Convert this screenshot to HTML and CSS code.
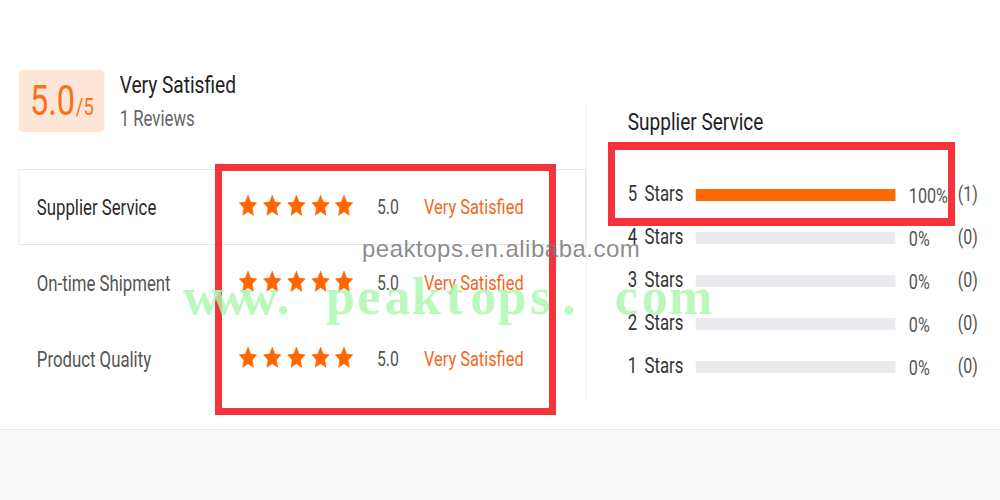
FILE: index.html
```html
<!DOCTYPE html>
<html lang="en">
<head>
<meta charset="utf-8">
<title>Supplier Reviews</title>
<link rel="stylesheet" href="styles.css">
</head>
<body>
<div class="frame">
<div class="page">
  <div class="main">
    <div class="left-col">
      <div class="summary">
        <div class="score-box"><span class="score">5.0</span><span class="score-of">/5</span></div>
        <div class="summary-text">
          <div class="summary-title">Very Satisfied</div>
          <div class="summary-count">1 Reviews</div>
        </div>
      </div>
      <div class="table">
        <div class="row active">
          <div class="row-label">Supplier Service</div>
          <div class="stars">
            <svg class="star" viewBox="0 0 24 24" preserveAspectRatio="none"><path d="M12 1.3L15.23 8.35 22.94 9.25 17.23 14.5 18.76 22.1 12 18.3 5.24 22.1 6.77 14.5 1.06 9.25 8.77 8.35Z"/></svg>
            <svg class="star" viewBox="0 0 24 24" preserveAspectRatio="none"><path d="M12 1.3L15.23 8.35 22.94 9.25 17.23 14.5 18.76 22.1 12 18.3 5.24 22.1 6.77 14.5 1.06 9.25 8.77 8.35Z"/></svg>
            <svg class="star" viewBox="0 0 24 24" preserveAspectRatio="none"><path d="M12 1.3L15.23 8.35 22.94 9.25 17.23 14.5 18.76 22.1 12 18.3 5.24 22.1 6.77 14.5 1.06 9.25 8.77 8.35Z"/></svg>
            <svg class="star" viewBox="0 0 24 24" preserveAspectRatio="none"><path d="M12 1.3L15.23 8.35 22.94 9.25 17.23 14.5 18.76 22.1 12 18.3 5.24 22.1 6.77 14.5 1.06 9.25 8.77 8.35Z"/></svg>
            <svg class="star" viewBox="0 0 24 24" preserveAspectRatio="none"><path d="M12 1.3L15.23 8.35 22.94 9.25 17.23 14.5 18.76 22.1 12 18.3 5.24 22.1 6.77 14.5 1.06 9.25 8.77 8.35Z"/></svg>
          </div>
          <div class="row-value">5.0</div>
          <div class="row-status">Very Satisfied</div>
        </div>
        <div class="row">
          <div class="row-label">On-time Shipment</div>
          <div class="stars">
            <svg class="star" viewBox="0 0 24 24" preserveAspectRatio="none"><path d="M12 1.3L15.23 8.35 22.94 9.25 17.23 14.5 18.76 22.1 12 18.3 5.24 22.1 6.77 14.5 1.06 9.25 8.77 8.35Z"/></svg>
            <svg class="star" viewBox="0 0 24 24" preserveAspectRatio="none"><path d="M12 1.3L15.23 8.35 22.94 9.25 17.23 14.5 18.76 22.1 12 18.3 5.24 22.1 6.77 14.5 1.06 9.25 8.77 8.35Z"/></svg>
            <svg class="star" viewBox="0 0 24 24" preserveAspectRatio="none"><path d="M12 1.3L15.23 8.35 22.94 9.25 17.23 14.5 18.76 22.1 12 18.3 5.24 22.1 6.77 14.5 1.06 9.25 8.77 8.35Z"/></svg>
            <svg class="star" viewBox="0 0 24 24" preserveAspectRatio="none"><path d="M12 1.3L15.23 8.35 22.94 9.25 17.23 14.5 18.76 22.1 12 18.3 5.24 22.1 6.77 14.5 1.06 9.25 8.77 8.35Z"/></svg>
            <svg class="star" viewBox="0 0 24 24" preserveAspectRatio="none"><path d="M12 1.3L15.23 8.35 22.94 9.25 17.23 14.5 18.76 22.1 12 18.3 5.24 22.1 6.77 14.5 1.06 9.25 8.77 8.35Z"/></svg>
          </div>
          <div class="row-value">5.0</div>
          <div class="row-status">Very Satisfied</div>
        </div>
        <div class="row">
          <div class="row-label">Product Quality</div>
          <div class="stars">
            <svg class="star" viewBox="0 0 24 24" preserveAspectRatio="none"><path d="M12 1.3L15.23 8.35 22.94 9.25 17.23 14.5 18.76 22.1 12 18.3 5.24 22.1 6.77 14.5 1.06 9.25 8.77 8.35Z"/></svg>
            <svg class="star" viewBox="0 0 24 24" preserveAspectRatio="none"><path d="M12 1.3L15.23 8.35 22.94 9.25 17.23 14.5 18.76 22.1 12 18.3 5.24 22.1 6.77 14.5 1.06 9.25 8.77 8.35Z"/></svg>
            <svg class="star" viewBox="0 0 24 24" preserveAspectRatio="none"><path d="M12 1.3L15.23 8.35 22.94 9.25 17.23 14.5 18.76 22.1 12 18.3 5.24 22.1 6.77 14.5 1.06 9.25 8.77 8.35Z"/></svg>
            <svg class="star" viewBox="0 0 24 24" preserveAspectRatio="none"><path d="M12 1.3L15.23 8.35 22.94 9.25 17.23 14.5 18.76 22.1 12 18.3 5.24 22.1 6.77 14.5 1.06 9.25 8.77 8.35Z"/></svg>
            <svg class="star" viewBox="0 0 24 24" preserveAspectRatio="none"><path d="M12 1.3L15.23 8.35 22.94 9.25 17.23 14.5 18.76 22.1 12 18.3 5.24 22.1 6.77 14.5 1.06 9.25 8.77 8.35Z"/></svg>
          </div>
          <div class="row-value">5.0</div>
          <div class="row-status">Very Satisfied</div>
        </div>
      </div>
    </div>
    <div class="right-col">
      <div class="dist-title">Supplier Service</div>
      <div class="dist">
        <div class="dist-row">
          <div class="dist-label">5 Stars</div>
          <div class="bar"><div class="bar-fill" style="width:100%"></div></div>
          <div class="dist-pct">100%</div>
          <div class="dist-count">(1)</div>
        </div>
        <div class="dist-row">
          <div class="dist-label">4 Stars</div>
          <div class="bar"><div class="bar-fill" style="width:0%"></div></div>
          <div class="dist-pct">0%</div>
          <div class="dist-count">(0)</div>
        </div>
        <div class="dist-row">
          <div class="dist-label">3 Stars</div>
          <div class="bar"><div class="bar-fill" style="width:0%"></div></div>
          <div class="dist-pct">0%</div>
          <div class="dist-count">(0)</div>
        </div>
        <div class="dist-row">
          <div class="dist-label">2 Stars</div>
          <div class="bar"><div class="bar-fill" style="width:0%"></div></div>
          <div class="dist-pct">0%</div>
          <div class="dist-count">(0)</div>
        </div>
        <div class="dist-row">
          <div class="dist-label">1 Stars</div>
          <div class="bar"><div class="bar-fill" style="width:0%"></div></div>
          <div class="dist-pct">0%</div>
          <div class="dist-count">(0)</div>
        </div>
      </div>
    </div>
  </div>
  <div class="footer"></div>
</div>
</div>

<div class="mark mark-box mark-box-1"></div>
<div class="mark mark-box mark-box-2"></div>
<div class="mark watermark-url">peaktops.en.alibaba.com</div>
<div class="mark watermark-www"><span>w</span><span>w</span><span>w</span><span>.</span><span> </span><span>p</span><span>e</span><span>a</span><span>k</span><span>t</span><span>o</span><span>p</span><span>s</span><span>.</span><span> </span><span>c</span><span>o</span><span>m</span></div>
</body>
</html>
```

FILE: styles.css
```css
html, body {
  margin: 0;
  padding: 0;
  width: 1000px;
  height: 500px;
  overflow: hidden;
  background: #ffffff;
}

body {
  position: relative;
  font-family: Roboto, "Noto Sans", "Liberation Sans", sans-serif;
  color: #333333;
}

.frame {
  width: 1000px;
  height: 500px;
  overflow: hidden;
}

/* the screenshot's UI is rendered horizontally condensed */
.page {
  width: 1282px;
  height: 500px;
  transform: scaleX(0.78);
  transform-origin: 0 0;
  display: flex;
  flex-direction: column;
  padding-top: 70px;
  box-sizing: border-box;
}

.main {
  display: flex;
  align-items: stretch;
}

.left-col {
  margin-left: 24.4px;
  width: 726.9px;
  display: flex;
  flex-direction: column;
}

.summary {
  display: flex;
  align-items: flex-start;
  height: 62px;
}

.score-box {
  width: 110px;
  height: 62px;
  background: #fee6d6;
  border-radius: 5px;
  display: flex;
  align-items: baseline;
  justify-content: center;
  color: #f8701c;
  line-height: 62px;
}

.score {
  font-size: 41.6px;
}

.score-of {
  font-size: 23.7px;
  margin-left: 1px;
}

.summary-text {
  margin-left: 19px;
  display: flex;
  flex-direction: column;
}

.summary-title {
  font-size: 24.5px;
  line-height: 30px;
  color: #222222;
}

.summary-count {
  font-size: 21.5px;
  line-height: 32px;
  margin-top: 3px;
  color: #666666;
}

.table {
  margin-top: 37px;
  display: flex;
  flex-direction: column;
}

.row {
  height: 76px;
  box-sizing: border-box;
  border: 1px solid transparent;
  display: flex;
  align-items: center;
  padding-left: 21.8px;
}

.row.active {
  border-color: #e6e6e6;
}

.row-label {
  width: 259px;
  font-size: 21.5px;
  color: #555555;
}

.row.active .row-label {
  color: #2a2a2a;
}

.stars {
  width: 177px;
  display: flex;
  gap: 6.8px;
  margin-top: -4px;
}

.star {
  flex: none;
  display: block;
  width: 24px;
  height: 23px;
  fill: #ff6600;
  stroke: #ff6600;
  stroke-width: 0.8;
  stroke-linejoin: round;
}

.row-value {
  width: 60.3px;
  font-size: 20.3px;
  color: #555555;
}

.row-status {
  font-size: 21px;
  color: #f5671d;
}

.right-col {
  margin-top: 36px;
  border-left: 1px solid #e8e8e8;
  padding-left: 52.6px;
  padding-bottom: 11px;
  display: flex;
  flex-direction: column;
}

.dist-title {
  font-size: 24.4px;
  line-height: 32px;
  color: #222222;
}

.dist {
  margin-top: 34px;
  display: flex;
  flex-direction: column;
}

.dist-row {
  height: 43px;
  display: flex;
  align-items: center;
}

.dist-label {
  width: 87.2px;
  font-size: 21.5px;
  word-spacing: 4px;
  color: #333333;
}

.bar {
  width: 256.4px;
  height: 12px;
  background: #ebebef;
  margin-top: 2px;
}

.bar-fill {
  height: 100%;
  background: #ff6a00;
}

.dist-pct {
  margin-left: 16.7px;
  width: 62.8px;
  font-size: 20.7px;
  color: #555555;
  padding-top: 5px;
}

.dist-count {
  font-size: 20.5px;
  color: #555555;
}

.footer {
  margin-top: 31px;
  flex: 1;
  border-top: 1px solid #e6e6e6;
  background: #f9f9f9;
}

/* annotation overlays on top of the screenshot */
.mark {
  position: absolute;
}

.mark-box {
  box-sizing: border-box;
  border: 7px solid #f5333a;
}

.mark-box-1 {
  left: 215px;
  top: 164px;
  width: 341px;
  height: 251px;
}

.mark-box-2 {
  left: 608px;
  top: 142px;
  width: 347px;
  height: 84px;
  border-top-width: 8px;
  border-bottom-width: 8px;
}

.watermark-url {
  left: 362px;
  top: 237px;
  font-family: "Liberation Sans", Arial, sans-serif;
  font-size: 24px;
  line-height: 24px;
  letter-spacing: 0.5px;
  color: rgba(120, 120, 120, 0.85);
  white-space: nowrap;
}

.watermark-www {
  left: 183px;
  top: 272px;
  display: flex;
  font-family: "Liberation Serif", "Times New Roman", serif;
  font-weight: bold;
  font-size: 52px;
  line-height: 50px;
  color: rgba(170, 246, 170, 0.8);
  white-space: pre;
}

.watermark-www span {
  width: 28.6px;
  text-align: center;
}
```
